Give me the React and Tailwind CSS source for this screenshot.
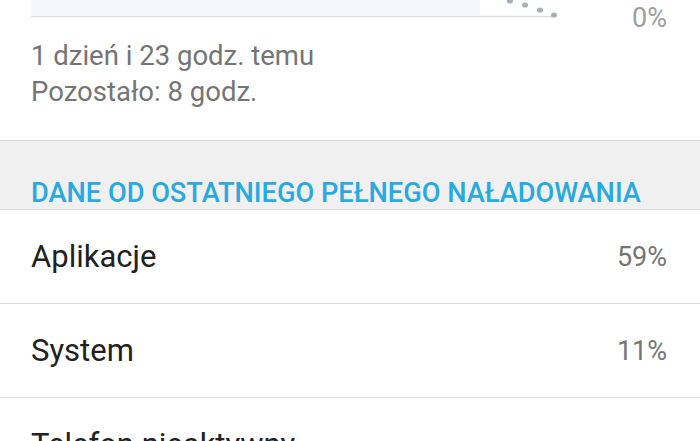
import React from 'react';

// Wiersz zużycia baterii
const UsageRow = ({ label, value }) => (
  <div className="flex h-[94px] items-center justify-between border-b border-[#dcdcdc] pl-[31px] pr-[33px]">
    <span className="text-[31px] leading-[36px] text-[#212121]">{label}</span>
    {value && <span className="text-[27px] leading-[32px] text-[#757575]">{value}</span>}
  </div>
);

const App = () => {
  const rows = [
    { label: 'Aplikacje', value: '59%' },
    { label: 'System', value: '11%' },
    { label: 'Telefon nieaktywny', value: '' },
  ];

  return (
    <div className="h-[441px] w-[700px] overflow-hidden bg-white font-['Roboto',sans-serif]">
      {/* Wykres i szacunki */}
      <div className="h-[141px] border-b border-[#d6d6d6]">
        <div className="flex h-[38px] items-start justify-between pl-[31px] pr-[33px]">
          <svg width="530" height="20" viewBox="0 0 530 20" className="block">
            <rect x="0" y="0" width="449" height="15" fill="#f4f8fc" />
            <line x1="0" y1="16.5" x2="524" y2="16.5" stroke="#dfdfdf" strokeWidth="1.5" />
            <ellipse cx="479" cy="1" rx="3" ry="2.6" fill="#a7afb4" />
            <ellipse cx="494" cy="5" rx="3" ry="2.6" fill="#a7afb4" />
            <ellipse cx="509" cy="10" rx="3" ry="2.6" fill="#a7afb4" />
            <ellipse cx="523" cy="15" rx="3" ry="2.6" fill="#a7afb4" />
          </svg>
          <span className="mt-[2px] text-[27px] leading-[32px] text-[#9e9e9e]">0%</span>
        </div>
        <div className="pl-[31px] text-[27.5px] leading-[36px] text-[#757575]">
          <div>1 dzień i 23 godz. temu</div>
          <div>Pozostało: 8 godz.</div>
        </div>
      </div>

      {/* Nagłówek sekcji */}
      <div className="flex h-[69px] items-end border-b border-[#dcdcdc] bg-[#f0f0f0] pl-[31px]">
        <span className="text-[27.2px] font-medium leading-[32px] text-[#29a9e1]">
          DANE OD OSTATNIEGO PEŁNEGO NAŁADOWANIA
        </span>
      </div>

      {rows.map((row) => (
        <UsageRow key={row.label} label={row.label} value={row.value} />
      ))}
    </div>
  );
};

export default App;
